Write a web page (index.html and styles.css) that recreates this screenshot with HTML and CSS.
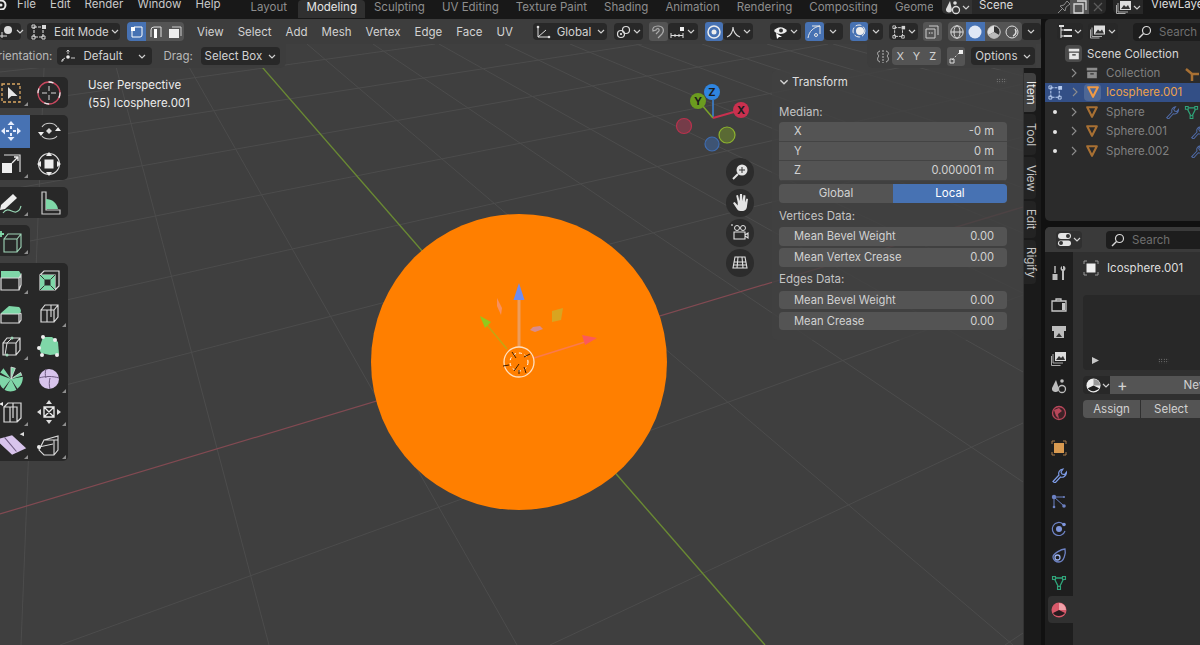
FILE: index.html
```html
<!DOCTYPE html>
<html lang="en">
<head>
    <meta charset="UTF-8">
    <title>Blender - Modeling</title>
    <link rel="stylesheet" href="styles.css">
</head>
<body>
    <svg class="defs" width="0" height="0">
        <symbol id="chev" viewBox="0 0 8 5"><path d="M1 1l3 3 3-3" fill="none" stroke="#d0d0d0" stroke-width="1.2"/></symbol>
        <symbol id="right" viewBox="0 0 6 10"><path d="M1 1l4 4-4 4" fill="none" stroke="#8c8c8c" stroke-width="1.1"/></symbol>
        <symbol id="tri" viewBox="0 0 16 16"><path d="M2.5 2.5h11L8 13.5z" fill="none" stroke="currentColor" stroke-width="2.4" stroke-linejoin="round"/></symbol>
        <symbol id="wrench" viewBox="0 0 16 16"><path d="M2 14.5l6-6.5c-1-2.5.5-5.5 4-6l-2 3 1 2 2.5.5 2-2.5c0 3.5-3 6-6 5l-5.5 6z" fill="none" stroke="currentColor" stroke-width="1.2"/></symbol>
        <symbol id="vgroup" viewBox="0 0 16 16"><path d="M3 3h10L8 13z" fill="none" stroke="currentColor" stroke-width="1.3"/><path d="M1.5 1.5h3v3h-3zM11.5 1.5h3v3h-3zM6.5 11.5h3v3h-3z" fill="#2a2a2a" stroke="currentColor" stroke-width="1.1"/></symbol>
        <symbol id="mesh-edit" viewBox="0 0 16 16"><path d="M3 3h9v10H3z" fill="none" stroke="currentColor" stroke-width="1.1" stroke-dasharray="3 1"/><path d="M1 1h3v3H1zM1 12h3v3H1zM11 12h3v3h-3z" fill="none" stroke="currentColor"/><path d="M11 1h4v4h-4z" fill="currentColor"/></symbol>
        <symbol id="search" viewBox="0 0 14 14"><circle cx="8.5" cy="5.5" r="4" fill="none" stroke="#d8d8d8" stroke-width="1.2"/><path d="M5.5 8.5L1 13" stroke="#d8d8d8" stroke-width="1.4"/></symbol>
        <symbol id="box" viewBox="0 0 16 16"><path d="M2 2h12v3H2z" fill="currentColor"/><path d="M2.5 6.5h11V14h-11z" fill="currentColor"/><path d="M6 9h4" stroke="#333" stroke-width="1.2"/></symbol>
        <symbol id="cube" viewBox="0 0 24 24"><path d="M4 9h13v12H4zM4 9l4-5h13v12l-4 5M17 9l4-5" fill="none" stroke="#dcdcdc" stroke-width="1.2"/></symbol>
    </svg>

    <div class="topbar">
        <div class="top-menu">
            <svg class="logo" width="8" height="10" viewBox="0 0 8 10"><circle cx="1" cy="5" r="4.5" fill="none" stroke="#e8e8e8" stroke-width="2"/><circle cx="1" cy="5" r="1.5" fill="#e8e8e8"/></svg>
            <span class="file">File</span><span>Edit</span><span>Render</span><span>Window</span><span>Help</span>
        </div>
        <div class="tabs">
            <span>Layout</span><span class="active">Modeling</span><span>Sculpting</span><span>UV Editing</span><span>Texture Paint</span><span>Shading</span><span>Animation</span><span>Rendering</span><span>Compositing</span><span class="cut">Geomet</span>
        </div>
        <div class="scene-block">
            <div class="scene-ico">
                <svg width="16" height="15" viewBox="0 0 16 15"><path d="M5 1L1 9a3 3 0 0 0 6 1z" fill="#dcdcdc"/><circle cx="11" cy="10" r="3.5" fill="none" stroke="#dcdcdc" stroke-width="1.3"/><circle cx="10" cy="3" r="1.8" fill="#dcdcdc"/></svg>
                <svg class="ch" width="8" height="5"><use href="#chev"/></svg>
            </div>
            <span class="scene-name">Scene</span>
            <svg class="pin" width="14" height="14" viewBox="0 0 14 14"><path d="M1 13l4-4M3 6l5 5 1-4 4-3-3-3-3 4z" fill="none" stroke="#8a8a8a"/></svg>
            <div class="scene-copy"><svg width="14" height="14" viewBox="0 0 14 14"><path d="M4 1h9v9M1 4h9v9H1z" fill="none" stroke="#d8d8d8" stroke-width="1.3"/></svg></div>
            <div class="scene-x"><svg width="10" height="10" viewBox="0 0 10 10"><path d="M1 1l8 8M9 1L1 9" stroke="#5c5c5c" stroke-width="1.2"/></svg></div>
        </div>
        <div class="layer-ico">
            <svg width="16" height="14" viewBox="0 0 16 14"><path d="M4 1h11v9H4z" fill="#dcdcdc"/><path d="M5 9l3-4 2 2 2-2 2 4z" fill="#333"/><path d="M2 3v9h10M.5 5v8.5h9" fill="none" stroke="#aaa"/></svg>
            <svg class="ch" width="8" height="5"><use href="#chev"/></svg>
        </div>
        <span class="layer-name">ViewLayer</span>
    </div>

    <div class="workspace">
        <div class="viewport">
            <svg class="scene" width="1041" height="626" viewBox="0 19 1041 626">
                <g class="grid">
                    <path d="M45 44L21 645M110 44L269 645M176 44L517 645M307 44L1013 645M373 44L1023 482M439 44L1023 372M505 44L1023 293M570 44L1023 233M636 44L1023 188M702 44L1023 151M767 44L1023 121M833 44L1023 96M899 44L1023 76"/>
                    <path d="M60 645L1023 295M550 645L1023 423M1005 645L1023 633M0 402L1023 137M0 315L1023 84M0 247L1023 43M0 191L828 44M0 144L642 44M0 105L435 44M0 72L250 44"/>
                </g>
                <path class="axis-x" d="M0 514L1023 207"/>
                <path class="axis-y" d="M242 44L765 645"/>
                <circle class="ball" cx="519" cy="362" r="148"/>

                <!-- transform gizmo -->
                <path d="M519 347V296" stroke="#ed9d5c" stroke-width="3"/>
                <path d="M519 283l-5.5 17h11z" fill="#6f8cf0"/>
                <path d="M507 349L487 325" stroke="#c2a612" stroke-width="1.5"/>
                <path d="M480 316l11 6-6 6z" fill="#93c81d"/>
                <path d="M534 358L585 342" stroke="#fb7a4d" stroke-width="1.5"/>
                <path d="M597 338l-15-3 3 10z" fill="#fb5a5a"/>
                <path d="M497 298l5 10-1 7-4-9z" fill="#f8905e"/>
                <path d="M552 311l11-3-2 12-9 2z" fill="#d9a420"/>
                <path d="M533 327l7-1 3 3-8 3-5-2z" fill="#d98c8c"/>
                <circle cx="519" cy="362" r="15" fill="none" stroke="#ffe0c0" stroke-width="1.3"/>
                <circle cx="519" cy="362" r="9" fill="none" stroke="#fff" stroke-dasharray="3 3"/>
                <path d="M512 352l4 6M503 366l6-1M524 357l6-3M519 364l-5 7M524 367l2 6M519 370v4" stroke="#3a1c00"/>

                <!-- axis gizmo -->
                <path d="M713 118V100" stroke="#3c85d8" stroke-width="1.5"/>
                <path d="M713 118L701 104" stroke="#7ba32a" stroke-width="1.5"/>
                <path d="M713 118L734 112" stroke="#c9304f" stroke-width="2"/>
                <circle cx="684" cy="126" r="7.5" fill="#753c49" stroke="#b9324d" stroke-width="1.2"/>
                <circle cx="712" cy="144" r="7" fill="#3e5474" stroke="#3e6cb0" stroke-width="1.2"/>
                <circle cx="727" cy="135" r="8" fill="#5a6a34" stroke="#8db32e" stroke-width="1.2"/>
                <circle cx="698" cy="101" r="8" fill="#6b9c1f"/>
                <circle cx="712" cy="92" r="8" fill="#2f85e0"/>
                <circle cx="741" cy="110" r="8" fill="#c9304f"/>
                <text class="gz" x="698" y="105">Y</text>
                <text class="gz" x="712" y="96">Z</text>
                <text class="gz" x="741" y="114">X</text>

                <!-- navigation gizmo -->
                <circle class="nav-bg" cx="740" cy="172" r="14"/>
                <circle class="nav-bg" cx="740" cy="203" r="14"/>
                <circle class="nav-bg" cx="740" cy="233" r="14"/>
                <circle class="nav-bg" cx="740" cy="263" r="14"/>
                <circle cx="742" cy="170" r="5.5" fill="#e4e4e4"/>
                <path d="M738 174l-5 5" stroke="#e4e4e4" stroke-width="2"/>
                <path d="M742 167v6M739 170h6" stroke="#333"/>
                <path d="M733 203l4 6c1 2 3 2 5 2 3 0 5-2 5-5l1-7-1.5-.5-1.5 4 .5-7-2-.5-1 6-.5-7h-2l-.5 7-1.5-6-1.8.5 1.5 7v3l-3-3.5z" fill="#e4e4e4"/>
                <circle cx="737" cy="228" r="2.5" fill="none" stroke="#e4e4e4"/>
                <circle cx="743" cy="228" r="2.5" fill="none" stroke="#e4e4e4"/>
                <path d="M734 232h11v7h-11zM745 235l3-2v5l-3-2zM732 226v-2" fill="none" stroke="#e4e4e4" stroke-width="1.1"/>
                <path d="M735 257h10l2 11h-14zM734 262h12M733 265h14M738 257l-1 11M742 257l1 11" fill="none" stroke="#e4e4e4" stroke-width="1.1"/>
            </svg>

            <div class="header">
                <div class="pill w-editor">
                    <svg width="16" height="14" viewBox="0 0 16 14"><circle cx="10" cy="5" r="4" fill="#dcdcdc"/><path d="M0 11h9M4 7v6" stroke="#dcdcdc"/></svg>
                    <svg class="ch" width="8" height="5"><use href="#chev"/></svg>
                </div>
                <div class="pill w-mode">
                    <svg class="mode-ico" width="16" height="16"><use href="#mesh-edit"/></svg>
                    <span class="mode-label">Edit Mode</span>
                    <svg class="ch" width="8" height="5"><use href="#chev"/></svg>
                </div>
                <div class="seg select-modes">
                    <div class="cell blue"><svg width="14" height="14" viewBox="0 0 14 14"><path d="M4 2h8v8a2 2 0 0 1-2 2H2V6" fill="none" stroke="#fff"/><rect x="1" y="2" width="4" height="4" fill="#fff"/></svg></div>
                    <div class="cell gray"><svg width="14" height="14" viewBox="0 0 14 14"><path d="M2 12V5a3 3 0 0 1 3-3h7v10" fill="none" stroke="#ddd"/><rect x="5" y="4" width="3" height="9" fill="#fff"/></svg></div>
                    <div class="cell gray"><svg width="14" height="14" viewBox="0 0 14 14"><path d="M4 2h9v9" fill="none" stroke="#ccc"/><rect x="1" y="4" width="10" height="9" fill="#eee"/></svg></div>
                </div>
                <nav class="menus"><span>View</span><span>Select</span><span>Add</span><span>Mesh</span><span>Vertex</span><span>Edge</span><span>Face</span><span>UV</span></nav>
                <div class="pill w-global">
                    <svg width="16" height="14" viewBox="0 0 16 14"><path d="M3 2v10h11M3 12l8-7" fill="none" stroke="#ddd"/><circle cx="3" cy="2" r="1.3" fill="#ddd"/><circle cx="14" cy="12" r="1.3" fill="#ddd"/></svg>
                    <span class="global-label">Global</span>
                    <svg class="ch" width="8" height="5"><use href="#chev"/></svg>
                </div>
                <div class="pill w-pivot ml7">
                    <svg width="15" height="14" viewBox="0 0 15 14"><circle cx="5" cy="9" r="3.5" fill="none" stroke="#ddd" stroke-width="1.2"/><circle cx="10" cy="5" r="3.5" fill="none" stroke="#ddd" stroke-width="1.2"/><circle cx="5" cy="9" r="1" fill="#fff"/></svg>
                    <svg class="ch" width="8" height="5"><use href="#chev"/></svg>
                </div>
                <div class="cell gray ml6"><svg width="14" height="15" viewBox="0 0 14 15"><path d="M7 14l4-4c3-4 1-8-4-8-4 0-6 2-5 5l3-1c0-2 4-2 3 1L5 10" fill="none" stroke="#aaa" stroke-width="1.2"/></svg></div>
                <div class="pill w-snap">
                    <svg width="15" height="14" viewBox="0 0 15 14"><path d="M1 8v5M5 9v3M9 9v3M13 8v5M1 10.5h12" stroke="#ddd"/><rect x="10" y="2" width="4" height="4" fill="#eee"/></svg>
                    <svg class="ch" width="8" height="5"><use href="#chev"/></svg>
                </div>
                <div class="cell blue ml7"><svg width="14" height="14" viewBox="0 0 14 14"><circle cx="7" cy="7" r="6" fill="none" stroke="#eee" stroke-width="1.5"/><circle cx="7" cy="7" r="2.5" fill="#eee"/></svg></div>
                <div class="pill w-snap">
                    <svg width="15" height="13" viewBox="0 0 15 13"><path d="M1 12c4-1 6-6 6-10 0 4 3 9 7 10" fill="none" stroke="#ddd" stroke-width="1.1"/></svg>
                    <svg class="ch" width="8" height="5"><use href="#chev"/></svg>
                </div>
                <div class="pill w-eye ml17">
                    <svg width="15" height="14" viewBox="0 0 15 14"><path d="M1 6c3-5 10-5 13 0-3 4-10 4-13 0z" fill="#eee"/><circle cx="8" cy="5.5" r="2" fill="#333"/><path d="M3 8l1 6 2-2 3 0z" fill="#fff"/></svg>
                    <svg class="ch" width="8" height="5"><use href="#chev"/></svg>
                </div>
                <div class="cell blue ml4"><svg width="15" height="15" viewBox="0 0 15 15"><path d="M1 14C2 7 7 3 13 2M5 2h8v8" fill="none" stroke="#e8e8e8"/><circle cx="9" cy="11" r="1.5" fill="none" stroke="#e8e8e8"/></svg></div>
                <div class="pill w-ch1"><svg class="ch" width="8" height="5"><use href="#chev"/></svg></div>
                <div class="cell blue ml7"><svg width="15" height="15" viewBox="0 0 15 15"><circle cx="8" cy="7" r="6" fill="none" stroke="#eee" stroke-dasharray="6 2"/><circle cx="9" cy="7" r="4" fill="#eee"/></svg></div>
                <div class="pill w-ch2"><svg class="ch" width="8" height="5"><use href="#chev"/></svg></div>
                <div class="pill w-mesh ml6">
                    <svg width="14" height="14"><use href="#mesh-edit"/></svg>
                    <svg class="ch" width="8" height="5"><use href="#chev"/></svg>
                </div>
                <div class="cell gray xray ml5"><svg width="14" height="14" viewBox="0 0 14 14"><path d="M4 1h9v9M1 4h9v9H1z" fill="none" stroke="#ccc"/><circle cx="4.5" cy="8" r=".8" fill="#ccc"/><circle cx="7" cy="8" r=".8" fill="#ccc"/></svg></div>
                <div class="seg ml6">
                    <div class="cell gray"><svg width="14" height="14" viewBox="0 0 14 14"><circle cx="7" cy="7" r="6.2" fill="none" stroke="#ddd"/><ellipse cx="7" cy="7" rx="3" ry="6.2" fill="none" stroke="#ddd"/><path d="M1 7h12" stroke="#ddd"/></svg></div>
                    <div class="cell blue"><svg width="14" height="14"><circle cx="7" cy="7" r="6.5" fill="#dfe7f5"/></svg></div>
                    <div class="cell gray"><svg width="14" height="14" viewBox="0 0 14 14"><circle cx="7" cy="7" r="6.2" fill="#333" stroke="#ddd"/><path d="M7 .8A6.2 6.2 0 0 0 1.6 10L7 7z" fill="#ddd"/><path d="M7 7l5.4 3A6.2 6.2 0 0 1 1.6 10z" fill="#bbb"/></svg></div>
                    <div class="cell gray"><svg width="14" height="14" viewBox="0 0 14 14"><circle cx="7" cy="7" r="6" fill="none" stroke="#ddd"/><path d="M10 4a4.5 4.5 0 0 1-2 7" fill="none" stroke="#ddd" stroke-width="1.5"/></svg></div>
                </div>
                <div class="pill w-ch1"><svg class="ch" width="8" height="5"><use href="#chev"/></svg></div>
            </div>

            <div class="tool-settings">
                <div class="ts-left">
                    <span class="ts-label orient">Orientation:</span>
                    <div class="pill w-default">
                        <svg width="15" height="15" viewBox="0 0 15 15"><circle cx="7" cy="8" r="1.8" fill="#eee"/><path d="M7 5V1M5.5 2.5L7 1l1.5 1.5M10 9h4M1 11l3-2M1 13v-2h2" fill="none" stroke="#ddd" stroke-width=".9"/></svg>
                        <span class="default-label">Default</span>
                        <svg class="ch" width="8" height="5"><use href="#chev"/></svg>
                    </div>
                    <span class="ts-label drag">Drag:</span>
                    <div class="pill w-drag"><span>Select Box</span><svg class="ch" width="8" height="5"><use href="#chev"/></svg></div>
                </div>
                <div class="ts-right">
                    <svg class="mirror" width="16" height="15" viewBox="0 0 16 15"><path d="M8 1v13" stroke="#bbb" stroke-dasharray="2 1"/><path d="M5 2C2 3 2 5 4 7c-2 2-2 5 1 6M11 2c3 1 3 3 1 5 2 2 2 5-1 6" fill="none" stroke="#bbb"/></svg>
                    <div class="seg xyz"><div class="cell gray">X</div><div class="cell gray">Y</div><div class="cell gray">Z</div></div>
                    <div class="cell gray auto-merge"><svg width="15" height="15" viewBox="0 0 15 15"><path d="M3 11l8-8" stroke="#ccc" stroke-dasharray="2 2"/><path d="M1 10h4v4H1z" fill="none" stroke="#ddd"/><path d="M10 1h4v4h-4z" fill="#eee"/></svg></div>
                    <div class="pill w-options"><span>Options</span><svg class="ch" width="8" height="5"><use href="#chev"/></svg></div>
                </div>
            </div>

            <div class="view-info">
                <div>User Perspective</div>
                <div>(55) Icosphere.001</div>
            </div>

            <div class="toolbar">
                <div class="tool-group short">
                    <div class="tool more"><svg width="24" height="24" viewBox="0 0 24 24"><path d="M3 3h18v18H3z" fill="none" stroke="#d9a662" stroke-width="1.3" stroke-dasharray="3 2"/><path d="M9 6v12l3.5-3 6 0z" fill="#e6e6e6"/></svg></div>
                    <div class="tool"><svg width="24" height="24" viewBox="0 0 24 24"><circle cx="12" cy="12" r="11" fill="none" stroke="#c9485f" stroke-width="1.3"/><circle cx="12" cy="12" r="11" fill="none" stroke="#e6e6e6" stroke-width="1.3" stroke-dasharray="5 12"/><path d="M12 5v5M12 14v5M5 12h5M14 12h5" stroke="#d8d8d8"/></svg></div>
                </div>
                <div class="tool-group mid">
                    <div class="tool on"><svg width="26" height="26" viewBox="0 0 26 26"><path d="M13 3l-3.500 4h7zM13 23l-3.500-4h7zM3 13l4-3.500v7zM23 13l-4-3.500v7z" fill="#e8eefc"/><path d="M13 8v3M13 15v3M8 13h3M15 13h3" stroke="#e8eefc" stroke-width="2"/></svg></div>
                    <div class="tool"><svg width="26" height="26" viewBox="0 0 26 26"><path d="M13 10l3 3-3 3-3-3z" fill="#dcdcdc"/><path d="M6 9C9 4 18 4 21 9M21 18c-3 4-12 4-15 0" fill="none" stroke="#c8c8c8" stroke-width="1.1"/><path d="M19 13l3-4 3 4zM2 14l3 4 3-4z" fill="#eee"/></svg></div>
                    <div class="tool more"><svg width="24" height="24" viewBox="0 0 24 24"><path d="M5 3h16v17" fill="none" stroke="#ddd" stroke-width="1.2"/><rect x="3" y="11" width="10" height="10" fill="#eee"/><path d="M13 11l6-6M15 5h4v4" fill="none" stroke="#eee" stroke-width="1.3"/></svg></div>
                    <div class="tool"><svg width="26" height="26" viewBox="0 0 26 26"><rect x="8.5" y="8.5" width="9" height="9" fill="#eee"/><circle cx="13" cy="13" r="10.5" fill="none" stroke="#ddd" stroke-width="1.1"/><path d="M13 1l-3 4h6zM13 25l-3-4h6zM1 13l4-3v6zM25 13l-4-3v6z" fill="#eee"/></svg></div>
                </div>
                <div class="tool-group short">
                    <div class="tool more"><svg width="26" height="26" viewBox="0 0 26 26"><path d="M3 15l12-11 4 4L7 19l-5 1z" fill="#eee"/><path d="M5 23c5-7 9 0 13-1s4-3 5-6" fill="none" stroke="#9ad8b6" stroke-width="1.2"/></svg></div>
                    <div class="tool"><svg width="26" height="26" viewBox="0 0 26 26"><path d="M6 2h4v18h14v4H6z" fill="none" stroke="#ccc" stroke-width="1.2"/><path d="M10 9c6 0 11 4 12 10H10z" fill="#7fd7a8"/></svg></div>
                </div>
                <div class="tool-group short single">
                    <div class="tool more"><svg width="26" height="26" viewBox="0 0 26 26"><path d="M0 6h6M3 3v6" stroke="#7fd7a8" stroke-width="1.8"/><path d="M6 11h13v13H6zM6 11l4-5h13v13l-4 5M19 11l4-5" fill="none" stroke="#9fd6b8" stroke-width="1.1"/></svg></div>
                </div>
                <div class="tool-group">
                    <div class="tool more"><svg width="24" height="24" viewBox="0 0 24 24"><path d="M2 3h18l2 3v4H2z" fill="#7fd7a8"/><path d="M2 10h18v12H2zM20 10l2-3v10l-2 5" fill="none" stroke="#dcdcdc" stroke-width="1.2"/></svg></div>
                    <div class="tool"><svg width="24" height="24" viewBox="0 0 24 24"><path d="M3 7h15v15H3zM3 7l4-4h15v15l-4 4" fill="none" stroke="#dcdcdc" stroke-width="1.2"/><path d="M3 7h15v15H3zM7.5 11.5v6h6v-6z" fill="#7fd7a8" fill-rule="evenodd"/><path d="M3 7l4.5 4.5M18 7l-4.5 4.5M3 22l4.5-4.5M18 22l-4.5-4.5" stroke="#333"/></svg></div>
                    <div class="tool"><svg width="24" height="24" viewBox="0 0 24 24"><path d="M2 12l8-7 10 1c3 3 2 6 0 7H2z" fill="#7fd7a8"/><path d="M2 13h18v9H2zM20 13c2-1 2-1 2 0v6l-2 3" fill="none" stroke="#dcdcdc" stroke-width="1.2"/></svg></div>
                    <div class="tool more"><svg width="24" height="24" viewBox="0 0 24 24"><use href="#cube"/><path d="M10 9v12M14 4v12" stroke="#dcdcdc" stroke-width="1.1" fill="none"/></svg></div>
                    <div class="tool more"><svg width="24" height="24" viewBox="0 0 24 24"><use href="#cube"/><path d="M6 21l2-12 6-6" stroke="#ddd" fill="none"/><circle cx="8" cy="21" r="1.5" fill="#9fd6b8"/><circle cx="13" cy="4" r="1.5" fill="#9fd6b8"/></svg></div>
                    <div class="tool"><svg width="24" height="24" viewBox="0 0 24 24"><path d="M6 3h9l6 5 1 12-9 1-9-2-2-4z" fill="#7fd7a8"/><g fill="#eee"><circle cx="6" cy="3" r="2"/><circle cx="18" cy="6" r="2"/><circle cx="2" cy="14" r="2"/><circle cx="5" cy="21" r="2"/><circle cx="20" cy="21" r="2"/></g></svg></div>
                    <div class="tool"><svg width="28" height="28" viewBox="0 0 26 26"><path d="M13 13L2 9c-1 6 1 11 4 13zM13 13l-6 10c3 2 8 2 11 0zM13 13l6 9c4-3 5-7 5-11zM13 13L3 7l3-4z" fill="#7fd7a8"/><path d="M13 13V2l4 1zM13 13l9-6 1 3" fill="#7fd7a8" stroke="#dcdcdc" stroke-width=".8"/></svg></div>
                    <div class="tool more"><svg width="24" height="24" viewBox="0 0 24 24"><circle cx="12" cy="12" r="10" fill="#d8c4ec"/><path d="M2 11c6-2 14-2 20 0M9 2c-1 3-1 6 0 9M13 11c-1 4-1 7 0 11" fill="none" stroke="#6d5a80"/></svg></div>
                    <div class="tool more"><svg width="24" height="24" viewBox="0 0 24 24"><path d="M5 7h13v15H5zM5 7l4-4h13v15l-4 4M11 7v15M14 3v15" fill="none" stroke="#dcdcdc" stroke-width="1.2"/><path d="M0 4l4-2v4z" fill="#eee"/></svg></div>
                    <div class="tool more"><svg width="26" height="26" viewBox="0 0 26 26"><path d="M8 8h10v10H8zM8 8l10 10M18 8L8 18" fill="none" stroke="#eee" stroke-width="1.3"/><path d="M13 1l-3 4h6zM13 25l-3-4h6zM1 13l4-3v6zM25 13l-4-3v6z" fill="#ddd"/></svg></div>
                    <div class="tool more"><svg width="34" height="26" viewBox="0 0 30 24"><path d="M1 7l15-4 13 12-13 6z" fill="#d8c4ec"/><path d="M9 5l11 13" stroke="#6d5a80"/><path d="M23 2l4-2v4z" fill="#ddd"/></svg></div>
                    <div class="tool more"><svg width="26" height="26" viewBox="0 0 26 26"><path d="M8 8l14-4v14l-4 5H8l-5-5zM8 8l14 0M18 8v15" fill="none" stroke="#dcdcdc" stroke-width="1.1"/><circle cx="3" cy="15" r="2" fill="#eee"/><path d="M3 15l14-3" stroke="#dcdcdc"/></svg></div>
                </div>
            </div>

            <div class="n-panel">
                <div class="panel-title">
                    <svg width="10" height="6" viewBox="0 0 8 5"><use href="#chev"/></svg>
                    <span>Transform</span>
                    <i class="grip"></i>
                </div>
                <div class="sec-label first">Median:</div>
                <div class="field-stack">
                    <div class="field"><span>X</span><span>-0 m</span></div>
                    <div class="field"><span>Y</span><span>0 m</span></div>
                    <div class="field"><span>Z</span><span>0.000001 m</span></div>
                </div>
                <div class="toggle"><div>Global</div><div class="on">Local</div></div>
                <div class="sec-label">Vertices Data:</div>
                <div class="field single"><span>Mean Bevel Weight</span><span>0.00</span></div>
                <div class="field single"><span>Mean Vertex Crease</span><span>0.00</span></div>
                <div class="sec-label">Edges Data:</div>
                <div class="field single"><span>Mean Bevel Weight</span><span>0.00</span></div>
                <div class="field single"><span>Mean Crease</span><span>0.00</span></div>
            </div>

            <div class="side-tabs">
                <div class="v-tab t-item on">Item</div>
                <div class="v-tab t-tool">Tool</div>
                <div class="v-tab t-view">View</div>
                <div class="v-tab t-edit">Edit</div>
                <div class="v-tab t-rigify">Rigify</div>
            </div>
        </div>

        <div class="right-col">
            <div class="outliner">
                <div class="out-head">
                    <div class="pill w-display"><svg width="14" height="14" viewBox="0 0 14 14"><path d="M3 0v13M3 5h3M3 11h3" fill="none" stroke="#ddd"/><rect x="1" y="0" width="5" height="2" fill="#ddd"/><rect x="6" y="4" width="8" height="2" fill="#ddd"/><rect x="6" y="10" width="8" height="2" fill="#ddd"/></svg><svg class="ch" width="8" height="5"><use href="#chev"/></svg></div>
                    <div class="pill w-filter"><svg width="16" height="15" viewBox="0 0 16 14"><path d="M4 1h11v9H4z" fill="#dcdcdc"/><path d="M5 9l3-4 2 2 2-2 2 4z" fill="#333"/><path d="M2 3v9h10M.5 5v8.5h9" fill="none" stroke="#aaa"/></svg><svg class="ch" width="8" height="5"><use href="#chev"/></svg></div>
                    <div class="search-box out-search"><svg width="14" height="14"><use href="#search"/></svg><span>Search</span></div>
                </div>
                <div class="row root"><span class="root-ico"><svg width="14" height="14" class="c-light"><use href="#box"/></svg></span><span>Scene Collection</span></div>
                <div class="row dim"><svg class="arrow" width="6" height="10"><use href="#right"/></svg><svg class="obj c-grey" width="14" height="14"><use href="#box"/></svg><span>Collection</span>
                    <svg class="extra-far c-orange" width="16" height="16" viewBox="0 0 16 16"><path d="M8 8V15M8 8L2 3M8 8h7" fill="none" stroke="currentColor" stroke-width="2.5"/></svg></div>
                <div class="row selected"><svg class="mode" width="15" height="15"><use href="#mesh-edit"/></svg><svg class="arrow" width="6" height="10"><use href="#right"/></svg><span class="obj-bg"><svg class="c-hot" width="14" height="14"><use href="#tri"/></svg></span><span class="hot-name">Icosphere.001</span></div>
                <div class="row dim"><i class="dot"></i><svg class="arrow" width="6" height="10"><use href="#right"/></svg><svg class="obj c-orange" width="14" height="14"><use href="#tri"/></svg><span>Sphere</span>
                    <svg class="extra-mid c-blue" width="14" height="14"><use href="#wrench"/></svg><svg class="extra-far c-green" width="15" height="15"><use href="#vgroup"/></svg></div>
                <div class="row dim"><i class="dot"></i><svg class="arrow" width="6" height="10"><use href="#right"/></svg><svg class="obj c-orange" width="14" height="14"><use href="#tri"/></svg><span>Sphere.001</span>
                    <svg class="extra-edge c-blue" width="14" height="14"><use href="#wrench"/></svg></div>
                <div class="row dim"><i class="dot"></i><svg class="arrow" width="6" height="10"><use href="#right"/></svg><svg class="obj c-orange" width="14" height="14"><use href="#tri"/></svg><span>Sphere.002</span>
                    <svg class="extra-edge c-blue" width="14" height="14"><use href="#wrench"/></svg></div>
            </div>

            <div class="properties">
                <div class="prop-head">
                    <div class="editor-ico"><svg width="15" height="15" viewBox="0 0 15 15"><rect x="1" y="1" width="13" height="6" rx="3" fill="#e4e4e4"/><rect x="1" y="8.5" width="13" height="5.5" rx="2.7" fill="#e4e4e4"/><circle cx="11" cy="4" r="2" fill="#333"/><circle cx="4" cy="11" r="2" fill="#333"/></svg><svg class="ch" width="8" height="5"><use href="#chev"/></svg></div>
                    <div class="search-box prop-search"><svg width="14" height="14"><use href="#search"/></svg><span>Search</span></div>
                </div>
                <div class="prop-body">
                    <div class="prop-nav">
                        <div class="nav-ico"><svg width="16" height="16" viewBox="0 0 16 16"><path d="M12 1v3h-1V1C9 2 9 5 11 6v9h2V6c2-1 2-4 0-5z" fill="#bdbdbd"/><path d="M4 1v7" stroke="#bdbdbd" stroke-width="1.5"/><path d="M1.5 9h5v6h-5z" fill="#bdbdbd"/></svg></div>
                        <div class="nav-ico render-tab"><svg width="16" height="16" viewBox="0 0 16 16"><path d="M1 4h14v10H1zM5 4V2h5v2" fill="none" stroke="#c8c8c8" stroke-width="1.3"/><path d="M11 6h3v7h-3z" fill="#c8c8c8"/></svg></div>
                        <div class="nav-ico"><svg width="16" height="16" viewBox="0 0 16 16"><path d="M1 2h14v5h-2v7H3V7H1z" fill="#bdbdbd"/><path d="M5 13l3-4 3 4z" fill="#333"/></svg></div>
                        <div class="nav-ico"><svg width="16" height="16" viewBox="0 0 16 16"><path d="M4 1h11v9H4z" fill="#dcdcdc"/><path d="M5 9l3-4 2 2 2-2 2 4z" fill="#333"/><path d="M2 3v9h10M.5 5v9.5h9" fill="none" stroke="#aaa"/></svg></div>
                        <div class="nav-ico"><svg width="16" height="16" viewBox="0 0 16 16"><path d="M5 2L1 10a3.5 3.5 0 0 0 7 1z" fill="#bdbdbd"/><circle cx="11" cy="11" r="3.5" fill="none" stroke="#bdbdbd" stroke-width="1.3"/><circle cx="11" cy="3" r="1.8" fill="#bdbdbd"/></svg></div>
                        <div class="nav-ico"><svg width="16" height="16" viewBox="0 0 16 16"><circle cx="8" cy="8" r="6.5" fill="#3d2227" stroke="#b8475a" stroke-width="1.3"/><path d="M3 5l5-2 3 3-4 3 1 5-3-3z" fill="#b8475a"/></svg></div>
                        <div class="nav-ico object-tab"><svg width="16" height="16" viewBox="0 0 16 16"><rect x="3" y="3" width="10" height="10" fill="#d99a50"/><path d="M1 4V1h3M12 1h3v3M15 12v3h-3M4 15H1v-3" fill="none" stroke="#a87a4a"/></svg></div>
                        <div class="nav-ico c-bright"><svg width="16" height="16"><use href="#wrench"/></svg></div>
                        <div class="nav-ico"><svg width="16" height="16" viewBox="0 0 16 16"><circle cx="3" cy="3" r="2.2" fill="#6d82c4"/><circle cx="13" cy="12" r="1.8" fill="#6d82c4"/><circle cx="3" cy="13" r="1.3" fill="#6d82c4"/><circle cx="13" cy="3" r="1" fill="#6d82c4"/><path d="M3 3l10 9M3 3v10M3 3h10" stroke="#6d82c4"/></svg></div>
                        <div class="nav-ico"><svg width="16" height="16" viewBox="0 0 16 16"><path d="M12 3a6.5 6.5 0 1 0 2 7" fill="none" stroke="#6d82c4" stroke-width="1.2"/><circle cx="8" cy="8" r="3" fill="#7f96dc"/><circle cx="13" cy="3.5" r="1.8" fill="#7f96dc"/></svg></div>
                        <div class="nav-ico"><svg width="16" height="16" viewBox="0 0 16 16"><path d="M2 9c0-3 8-8 12-8 1 4-1 13-6 13-3 0-6-2-6-5z" fill="none" stroke="#6d82c4" stroke-width="1.3"/><circle cx="6.5" cy="9.5" r="2.5" fill="none" stroke="#9ab0ec" stroke-width="1.3"/></svg></div>
                        <div class="nav-ico c-green"><svg width="16" height="16"><use href="#vgroup"/></svg></div>
                        <div class="nav-ico mat-tab"><svg width="16" height="16" viewBox="0 0 16 16"><circle cx="8" cy="8" r="7.5" fill="#d8596a"/><path d="M8 8L2 11c2 4 9 4 12 0z" fill="#2a1a1e"/><path d="M8 8V1a7 7 0 0 1 7 7z" fill="#f0a0a8"/></svg></div>
                    </div>
                    <div class="prop-content">
                        <div class="obj-row">
                            <svg width="16" height="16" viewBox="0 0 16 16"><rect x="3.5" y="3.5" width="9" height="9" fill="#eee"/><path d="M1 4V1h3M12 1h3v3M15 12v3h-3M4 15H1v-3" fill="none" stroke="#999"/></svg>
                            <span>Icosphere.001</span>
                        </div>
                        <div class="slot-list">
                            <svg width="7" height="7" viewBox="0 0 7 7"><path d="M0 0l7 3.5L0 7z" fill="#c8c8c8"/></svg>
                            <i class="grip"></i>
                        </div>
                        <div class="slot-row">
                            <div class="slot-ball"><svg width="15" height="15" viewBox="0 0 16 16"><circle cx="8" cy="8" r="7.5" fill="#eee"/><path d="M8 8L2 11c2 4 9 4 12 0z" fill="#1f1f1f"/><path d="M8 8V1a7 7 0 0 1 7 7z" fill="#999"/></svg><svg class="ch" width="8" height="5"><use href="#chev"/></svg></div>
                            <div class="slot-new"><span class="plus">+</span><span class="new-text">New</span></div>
                        </div>
                        <div class="assign-row"><div>Assign</div><div>Select</div></div>
                    </div>
                </div>
            </div>
        </div>
    </div>
</body>
</html>
```
FILE: styles.css
```css
* {
    box-sizing: border-box;
}

body {
    margin: 0;
    width: 1200px;
    height: 645px;
    overflow: hidden;
    display: flex;
    flex-direction: column;
    background: #111;
    font-family: 'Inter', 'Liberation Sans', sans-serif;
    font-size: 11.5px;
    color: #d2d2d2;
}

.defs {
    position: absolute;
}

svg {
    display: block;
    flex: none;
}

/* top bar */
.topbar {
    height: 19px;
    flex: none;
    display: flex;
    background: #181818;
    overflow: hidden;
}

.top-menu {
    width: 242px;
    flex: none;
    display: flex;
    align-items: flex-start;
    line-height: 9px;
    color: #c9c9c9;
}

.top-menu span {
    margin-left: 14px;
}

.top-menu .file {
    margin-left: 9px;
}

.tabs {
    display: flex;
    width: 699px;
    flex: none;
    overflow: hidden;
    color: #8e8e8e;
    line-height: 14px;
}

.tabs span {
    padding: 0 8.5px;
    height: 18px;
    white-space: nowrap;
}

.tabs .active {
    margin-left: 2.5px;
    background: #303030;
    color: #e6e6e6;
    border-radius: 4px 4px 0 0;
}

.tabs .cut {
    width: 47px;
    overflow: hidden;
    padding-right: 0;
}

.scene-block {
    width: 164px;
    height: 14px;
    margin-left: 1px;
    background: #282828;
    border-radius: 0 0 5px 5px;
    display: flex;
    align-items: center;
    flex: none;
    line-height: 9px;
}

.scene-ico {
    width: 30px;
    height: 14px;
    display: flex;
    align-items: center;
    gap: 1px;
    padding-left: 3px;
    background: #333;
    border-radius: 0 0 0 5px;
}

.scene-name {
    margin-left: 7px;
    width: 78px;
    color: #dcdcdc;
    margin-top: -4px;
}

.scene-copy {
    width: 19px;
    height: 14px;
    margin-left: -1px;
    background: #545454;
    display: flex;
    justify-content: center;
}

.scene-x {
    margin-left: 4px;
}

.layer-ico {
    width: 30px;
    height: 14px;
    margin-left: 7px;
    background: #282828;
    border-radius: 0 0 0 5px;
    display: flex;
    align-items: center;
    gap: 1px;
    padding-left: 3px;
    flex: none;
}

.layer-name {
    margin-left: 8px;
    line-height: 9px;
    white-space: nowrap;
    color: #dcdcdc;
}

.workspace {
    flex: 1;
    display: flex;
    min-height: 0;
}

/* 3d viewport */
.viewport {
    width: 1041px;
    flex: none;
    position: relative;
    background: #3f3f3f;
    overflow: hidden;
}

.scene {
    position: absolute;
    left: 0;
    top: 0;
}

.grid path {
    fill: none;
    stroke: #4c4c4c;
    stroke-width: 1;
}

.axis-x {
    fill: none;
    stroke: #824a52;
    stroke-width: 1.2;
}

.axis-y {
    fill: none;
    stroke: #6a8a33;
    stroke-width: 1.4;
}

.ball {
    fill: #ff7f00;
}

.gz {
    font-size: 11px;
    font-weight: 700;
    text-anchor: middle;
    fill: #1c1c1c;
}

.nav-bg {
    fill: #2c2c2c;
}

.header {
    position: relative;
    height: 25px;
    display: flex;
    align-items: center;
    background: #3d3d3d;
    border-radius: 6px 6px 0 0;
}

.pill {
    height: 17px;
    background: #282828;
    border-radius: 4px;
    display: flex;
    align-items: center;
    justify-content: center;
    gap: 2px;
    flex: none;
}

.ch {
    flex: none;
}

.cell {
    width: 18.5px;
    height: 19px;
    flex: none;
    display: flex;
    align-items: center;
    justify-content: center;
    border-radius: 3px;
}

.seg {
    display: flex;
    flex: none;
}

.seg .cell {
    border-radius: 0;
}

.seg .cell:first-child {
    border-radius: 4px 0 0 4px;
}

.seg .cell:last-child {
    border-radius: 0 4px 4px 0;
}

.blue {
    background: #4772b3;
}

.gray {
    background: #545454;
}

.ml4 { margin-left: 4px; }
.ml5 { margin-left: 5px; }
.ml6 { margin-left: 6px; }
.ml7 { margin-left: 7px; }
.ml17 { margin-left: 17px; }

.w-editor { width: 21px; }
.w-mode {
    width: 93px;
    margin-left: 6px;
    justify-content: flex-start;
    padding-left: 4px;
}
.w-pivot { width: 29px; }
.w-snap { width: 30px; }
.w-eye { width: 31px; }
.w-ch1 { width: 19px; }
.w-ch2 { width: 15px; }
.w-mesh { width: 29px; }

.mode-ico {
    color: #d8d8d8;
}

.mode-label {
    margin: 0 auto 0 5px;
    white-space: nowrap;
}

.w-mode .ch {
    margin-right: 2px;
}

.select-modes {
    margin-left: 7px;
}

.select-modes .cell {
    width: 19px;
}

.menus {
    width: 349px;
    flex: none;
    display: flex;
    gap: 14px;
    padding-left: 13px;
}

.w-global {
    width: 74px;
    gap: 0;
}

.global-label {
    margin: 0 6px;
}

.tool-settings {
    position: relative;
    height: 24px;
    display: flex;
    justify-content: space-between;
}

.ts-left {
    width: 286px;
    background: #3d3d3d;
    border-radius: 0 0 6px 0;
    display: flex;
    align-items: center;
    white-space: nowrap;
}

.ts-label {
    color: #b8b8b8;
}

.orient {
    margin-left: -11px;
}

.w-default {
    width: 95px;
    margin-left: 5px;
    height: 18px;
    gap: 0;
    justify-content: flex-start;
    padding-left: 4px;
}

.default-label {
    margin: 0 auto 0 7px;
}

.w-default .ch {
    margin-right: 6px;
}

.drag {
    margin-left: 11px;
}

.w-drag {
    width: 79px;
    height: 18px;
    margin-left: 8px;
    gap: 6px;
}

.ts-right {
    width: 169px;
    margin-right: 5px;
    background: #3d3d3d;
    border-radius: 0 0 0 6px;
    display: flex;
    align-items: center;
    padding-left: 8px;
}

.xyz {
    margin-left: 1px;
}

.xyz .cell {
    width: 16.3px;
    height: 18px;
    font-size: 11px;
}

.auto-merge {
    margin-left: 6px;
}

.w-options {
    width: 64px;
    margin-left: 6px;
    height: 18px;
    gap: 6px;
}

.view-info {
    position: absolute;
    left: 88px;
    top: 57px;
    line-height: 18px;
    color: #ececec;
}

/* tool shelf */
.toolbar {
    position: absolute;
    left: -8px;
    top: 58px;
    width: 76px;
    display: flex;
    flex-direction: column;
    gap: 7px;
}

.tool-group {
    display: grid;
    grid-template-columns: 38px 38px;
    grid-auto-rows: 33px;
    background: #282828;
    border-radius: 5px;
}

.tool-group.short {
    grid-auto-rows: 31px;
}

.tool-group.mid {
    grid-auto-rows: 32.5px;
}

.tool-group.single {
    width: 38px;
    grid-template-columns: 38px;
}

.tool {
    position: relative;
    display: flex;
    align-items: center;
    justify-content: center;
}

.tool.on {
    background: #4772b3;
}

.tool.more::after {
    content: "";
    position: absolute;
    right: 2px;
    bottom: 2px;
    border-left: 4px solid transparent;
    border-bottom: 4px solid #8e8e8e;
}

/* n panel */
.n-panel {
    position: absolute;
    left: 772px;
    top: 51px;
    width: 251px;
    height: 270px;
    padding: 0 16px 0 7px;
    background: rgba(65, 65, 65, 0.82);
    border-radius: 5px;
}

.panel-title {
    height: 24px;
    display: flex;
    align-items: center;
    color: #dedede;
    position: relative;
}

.panel-title span {
    margin-left: 3px;
}

.panel-title .grip {
    position: absolute;
    right: 0;
    top: 8px;
}

.grip {
    display: block;
    width: 11px;
    height: 6px;
    background-image: radial-gradient(#9a9a9a 0.6px, transparent 0.8px);
    background-size: 2.5px 2.5px;
}

.sec-label {
    height: 20px;
    line-height: 20px;
    margin-bottom: 1.5px;
    color: #c4c4c4;
}

.sec-label.first {
    margin: 8px 0 0;
}

.field-stack {
    border-radius: 4px;
    overflow: hidden;
}

.field {
    height: 19.5px;
    padding: 0 13px 0 15px;
    background: #545454;
    display: flex;
    align-items: center;
    justify-content: space-between;
    border-bottom: 1px solid #444;
    font-size: 11.2px;
}

.field.single {
    height: 18.5px;
    border-bottom: 0;
    border-radius: 4px;
    margin-bottom: 2.5px;
}

.toggle {
    margin: 3px 0;
    height: 19px;
    display: grid;
    grid-template-columns: 1fr 1fr;
    text-align: center;
    line-height: 19px;
    border-radius: 4px;
    overflow: hidden;
    background: #545454;
}

.toggle .on {
    background: #4772b3;
    color: #fff;
}

.side-tabs {
    position: absolute;
    right: 0;
    top: 49px;
    bottom: 0;
    width: 18px;
    background: #1a1a1a;
    padding-top: 5px;
    border-left: 1px solid #333;
}

.v-tab {
    writing-mode: vertical-rl;
    background: #232323;
    border-radius: 0 4px 4px 0;
    margin-bottom: 2px;
    display: flex;
    align-items: center;
    justify-content: center;
    color: #c6c6c6;
    line-height: 1;
    height: 42px;
}

.v-tab.on {
    background: #414141;
    color: #efefef;
}

.t-item { height: 39px; }
.t-tool { height: 41px; }
.t-edit { height: 37px; }
.t-rigify { height: 44px; }

/* right column */
.right-col {
    flex: 1;
    min-width: 0;
    margin-left: 4px;
    display: flex;
    flex-direction: column;
    gap: 6px;
    overflow: hidden;
}

.outliner {
    height: 202px;
    flex: none;
    background: #2b2b2b;
    border-radius: 5px 0 0 5px;
    overflow: hidden;
}

.out-head {
    height: 25px;
    display: flex;
    align-items: center;
    padding-left: 12px;
}

.w-display {
    width: 26px;
}

.w-filter {
    width: 30px;
    margin-left: 5px;
}

.search-box {
    height: 18px;
    background: #1d1d1d;
    border-radius: 4px 0 0 4px;
    display: flex;
    align-items: center;
    color: #6f6f6f;
    flex: 1;
}

.search-box svg {
    margin-left: 5px;
}

.search-box span {
    margin-left: 7px;
}

.out-search {
    margin-left: 15px;
}

.row {
    height: 19.4px;
    display: flex;
    align-items: center;
    position: relative;
    white-space: nowrap;
    padding-left: 41px;
}

.row.root {
    padding-left: 20px;
    color: #d8d8d8;
}

.root-ico {
    width: 17px;
    height: 17px;
    margin-right: 5px;
    background: #4a4a4a;
    border-radius: 4px;
    display: flex;
    align-items: center;
    justify-content: center;
}

.row.dim {
    color: #808080;
    padding-left: 26px;
}

.row.selected {
    background: #334f86;
    padding-left: 0;
}

.row .arrow {
    margin-right: 8px;
}

.row .obj {
    margin-right: 7px;
}

.row .mode {
    margin: 0 9px 0 3px;
    color: #b9cdf0;
}

.obj-bg {
    width: 17px;
    height: 17px;
    margin: 0 5px 0 -2px;
    background: #4e6795;
    border-radius: 4px;
    display: flex;
    align-items: center;
    justify-content: center;
}

.hot-name {
    color: #eda24c;
}

.dot {
    position: absolute;
    left: 8px;
    top: 8px;
    width: 4px;
    height: 4px;
    border-radius: 50%;
    background: #e4e4e4;
}

.extra-mid,
.extra-far,
.extra-edge {
    position: absolute;
    top: 3px;
}

.extra-mid { left: 120px; }
.extra-far { left: 139px; }
.extra-edge { left: 145px; }

.c-light { color: #e6e6e6; }
.c-grey { color: #8d8d8d; }
.c-orange { color: #a87033; }
.c-hot { color: #f09a45; }
.c-blue { color: #4f6aa6; }
.c-green { color: #2fa57a; }
.c-bright { color: #7d9be6; }

/* properties editor */
.properties {
    flex: 1;
    display: flex;
    flex-direction: column;
    min-height: 0;
    background: #303030;
    border-radius: 5px 0 0 0;
    overflow: hidden;
}

.prop-head {
    height: 25px;
    flex: none;
    display: flex;
    align-items: center;
    padding-left: 11px;
    background: #3a3a3a;
}

.editor-ico {
    width: 26px;
    height: 18px;
    display: flex;
    align-items: center;
    gap: 1px;
    padding-left: 1px;
    background: #303030;
    border-radius: 4px;
}

.prop-search {
    margin-left: 24px;
}

.prop-body {
    flex: 1;
    display: flex;
    min-height: 0;
}

.prop-nav {
    width: 28px;
    flex: none;
    background: #1e1e1e;
    display: flex;
    flex-direction: column;
    align-items: center;
    padding-top: 7px;
}

.nav-ico {
    width: 25px;
    height: 27px;
    margin-left: 3px;
    display: flex;
    align-items: center;
    justify-content: center;
    padding-right: 3px;
}

.render-tab {
    margin-top: 5px;
}

.object-tab {
    margin-top: 8px;
}

.mat-tab {
    background: #303030;
    border-radius: 4px 0 0 4px;
}

.prop-content {
    flex: 1;
    min-width: 0;
    padding-left: 10px;
    overflow: hidden;
}

.obj-row {
    height: 43px;
    padding-bottom: 11px;
    display: flex;
    align-items: center;
    gap: 8px;
    color: #dedede;
}

.slot-list {
    height: 75px;
    background: #282828;
    border-radius: 4px 0 0 4px;
    display: flex;
    align-items: flex-end;
    padding: 0 0 6px 9px;
}

.slot-list .grip {
    margin-left: 59px;
}

.slot-row {
    margin-top: 6px;
    height: 18px;
    display: flex;
}

.slot-ball {
    width: 29px;
    background: #282828;
    border-radius: 4px 0 0 4px;
    display: flex;
    align-items: center;
    padding-left: 3px;
    gap: 1px;
}

.slot-new {
    flex: 1;
    background: #545454;
    display: flex;
    align-items: center;
    white-space: nowrap;
}

.plus {
    margin-left: 7px;
    font-size: 16px;
    line-height: 1;
}

.new-text {
    margin-left: 56px;
}

.assign-row {
    margin-top: 6px;
    height: 18px;
    display: grid;
    grid-template-columns: 57px 60px;
    gap: 1px;
    text-align: center;
    line-height: 18px;
}

.assign-row div {
    background: #545454;
}

.assign-row div:first-child {
    border-radius: 4px 0 0 4px;
}
```
